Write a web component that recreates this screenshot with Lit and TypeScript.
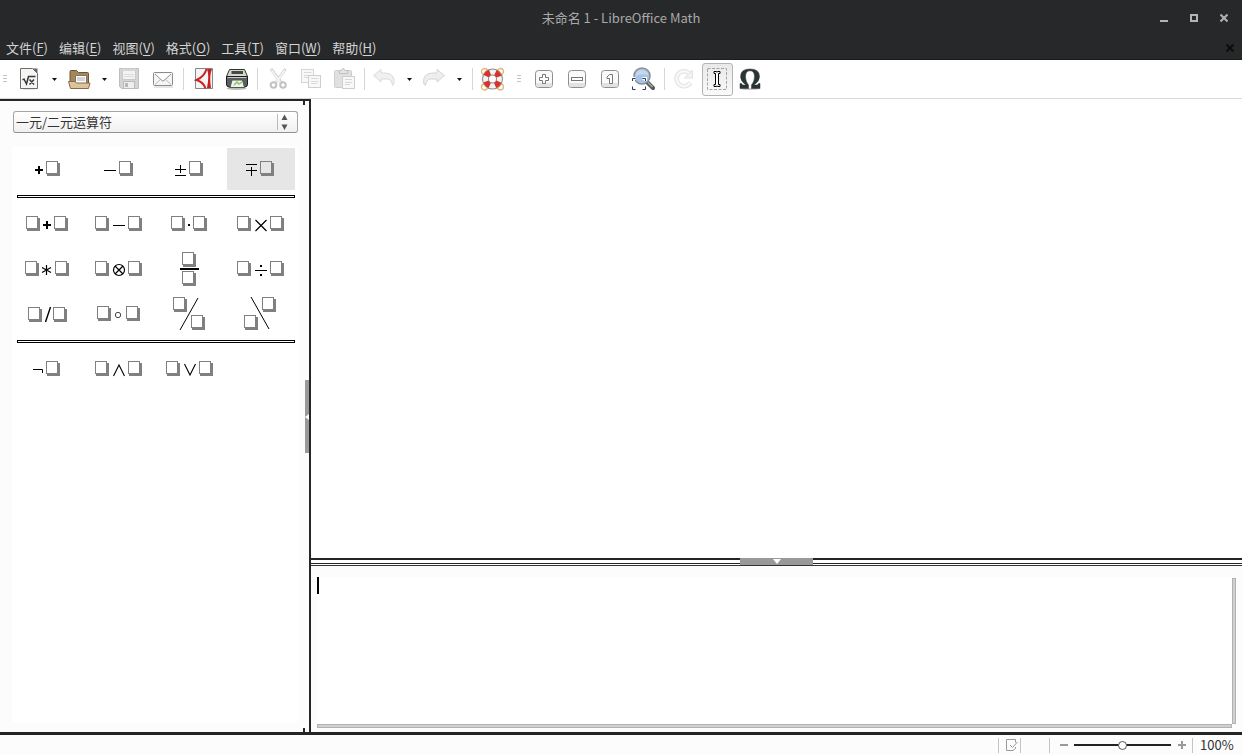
import { LitElement, html, svg, css, nothing } from "lit";
import type { TemplateResult } from "lit";
import { customElement, property, state } from "lit/decorators.js";
import { classMap } from "lit/directives/class-map.js";

/* ---------- Operator pictures, drawn on a 68 x 42 grid ---------- */

const box = (x: number, y: number, fill = "#fff") => svg`
  <rect x=${x + 1} y=${y + 2} width="13" height="13" fill="#808080"/>
  <rect x=${x + 0.5} y=${y + 0.5} width="11" height="12" fill=${fill} stroke="#808080"/>`;
const ink = (d: string, w = 1) => svg`<path d=${d} fill="none" stroke="#000" stroke-width=${w}/>`;

interface Operator { label: string; art: unknown }

const unary: Operator[] = [
  { label: "+a", art: [ink("M21 22H29M25 18V26", 2), box(32, 13)] },
  { label: "-a", art: [ink("M19 22.5H31"), box(34, 13)] },
  { label: "±a", art: [ink("M19 21.5H30M24.5 17V25M19 27.5H30"), box(33, 13)] },
  { label: "∓a", art: [ink("M19 16.5H30M24.5 19V28M19 22.5H30"), box(33, 13, "#e6e6e6")] },
];
const binary: Operator[] = [
  { label: "a+b", art: [box(12, 13), ink("M29 22H37M33 18V26", 2), box(40, 13)] },
  { label: "a-b", art: [box(10, 13), ink("M28 22.5H40"), box(43, 13)] },
  { label: "a·b", art: [box(15, 13), ink("M32 22H34", 2), box(37, 13)] },
  { label: "a×b", art: [box(10, 13), ink("M28.500 17L39.500 28M39.500 17L28.500 28", 1.2), box(43, 13)] },
  { label: "a*b", art: [box(11, 13), ink("M32.500 17V27M28 19.500L37 24.500M37 19.500L28 24.500", 1.2), box(41, 13)] },
  { label: "a⊗b", art: [box(10, 13), svg`<circle cx="34" cy="22" r="5.500" fill="none" stroke="#000" stroke-width="1.200"/>`, ink("M30 18L38 26M38 18L30 26", 1.2), box(43, 13)] },
  { label: "a/b 分数", art: [box(26, 4), ink("M24 21H43", 2), box(26, 23)] },
  { label: "a÷b", art: [box(10, 13), ink("M28 22.500H40"), ink("M33 18H35M33 27H35", 2), box(43, 13)] },
  { label: "a/b", art: [box(14, 14), ink("M36.500 14L31.500 29", 1.4), box(39, 14)] },
  { label: "a∘b", art: [box(12, 13), svg`<circle cx="33" cy="22" r="2.700" fill="none" stroke="#333" stroke-width="0.900"/>`, box(41, 13)] },
  { label: "a 斜线 b", art: [box(17, 4), ink("M42 5L24 37"), box(35, 22)] },
  { label: "a 反斜线 b", art: [box(35, 4), ink("M24 4L42 36"), box(17, 22)] },
];
const logical: Operator[] = [
  { label: "非 a", art: [ink("M19 21.500H28.500V25"), box(32, 13)] },
  { label: "a 与 b", art: [box(10, 13), ink("M28.500 28L34 17L39.500 28", 1.1), box(43, 13)] },
  { label: "a 或 b", art: [box(10, 13), ink("M28.500 16L34 27L39.500 16", 1.1), box(43, 13)] },
];

/* ---------- Toolbar icons, 24 x 24 ---------- */

const key = (inner: unknown) => svg`
  <rect x="3.500" y="3.500" width="17" height="17" rx="3" fill="#fafafa" stroke="#8e8e8e"/>
  <path d="M4 16H20V18Q20 20 17.500 20H6.500Q4 20 4 18Z" fill="#e2e2e2"/>
  ${inner}`;

const icons: Record<string, unknown> = {
  formula: svg`
    <ellipse cx="12" cy="21.500" rx="9" ry="1" fill="#ccc"/>
    <path d="M3.500 1.500H15.500L20.500 6.500V21.500H3.500Z" fill="#f5f5f4" stroke="#6d6f6c"/>
    <path d="M15.500 1.500H20.500V6.500Z" fill="#666"/>
    <path d="M5.500 13L7 12L9.500 17L11.500 9.500H18.500M12.500 12.500L17 17.500M17 12.500L12.500 17.500" fill="none" stroke="#383a38" stroke-width="1.500"/>`,
  open: svg`
    <path d="M3 19V4.500Q3 3.500 4 3.500H9.500L11.500 5.500H20.500Q21.500 5.500 21.500 6.500V19Z" fill="#a58659" stroke="#6d5431"/>
    <path d="M8.500 8.500H19.500V18H8.500Z" fill="#fff" stroke="#77756f"/>
    <path d="M10 11H18M10 13H18" stroke="#aaa"/>
    <path d="M1.500 14.500H8L9.500 16H23L21.500 21.500H3.500Z" fill="#dac49d" stroke="#8a6c42"/>`,
  save: svg`
    <path d="M2.500 1.500H21.500V21.500H4.500L2.500 19.500Z" fill="#d4d4d4" stroke="#bebebe"/>
    <rect x="5.500" y="1.500" width="13" height="11" fill="#f3f3f3" stroke="#c9c9c9"/>
    <path d="M5 3H19" stroke="#d6d6d6" stroke-width="2"/>
    <path d="M7 7.500H17M7 9.500H17" stroke="#ddd"/>
    <rect x="6.500" y="14.500" width="11" height="7" fill="#eee" stroke="#bbb"/>
    <rect x="8" y="16" width="3" height="4" fill="#b8b8b8"/>`,
  mail: svg`
    <path d="M4 20H23" stroke="#ccc"/>
    <rect x="3.500" y="5.500" width="19" height="13" rx="1" fill="#f5f5f5" stroke="#8a8c89"/>
    <path d="M5 17.500L10.500 12.500M21 17.500L15.500 12.500" stroke="#bbb"/>
    <path d="M5 7L12 13.500Q13 14.500 14 13.500L21 7" fill="#fff" stroke="#8e908c"/>`,
  pdf: svg`
    <path d="M4.500 1.500H21.500V21.500H4.500Z" fill="#f4f4f4" stroke="#85888a"/>
    <path d="M16 2Q18.500 9 16 21H20Q18 9 21 2Z" fill="#c81e1e"/>
    <path d="M15.500 2Q13.500 9.500 5.500 13Q12.500 15 14.500 21.500" fill="none" stroke="#cc2222" stroke-width="2"/>`,
  print: svg`
    <ellipse cx="12.500" cy="21.500" rx="10" ry="1.500" fill="#bbb"/>
    <path d="M5.500 2.500H20.500L23.500 9.500H2.500Z" fill="#d5d8c8" stroke="#2e3436"/>
    <path d="M7.500 4H19V7H7.500Z" fill="#444a44"/>
    <path d="M2.500 9.500H23.500V17Q23.500 20 21 20H5Q2.500 20 2.500 17Z" fill="#5a5f61" stroke="#1b1d1e"/>
    <path d="M3.500 10.500H22.500" stroke="#c4c8c6"/>
    <path d="M8 13H18.500L20.500 20.500H6Z" fill="#eef4e7" stroke="#555"/>
    <path d="M10 18L13 15L15 17L18 15" fill="none" stroke="#8cc46a" stroke-width="1.500"/>`,
  cut: svg`
    <path d="M6 2L16.500 16M20.500 2L10.500 16" stroke="#d0d0d0" stroke-width="3"/>
    <path d="M6.500 3L16 16M20 3L11 15.500" stroke="#f5f5f5" stroke-width="1.600"/>
    <circle cx="8.500" cy="18" r="2.800" fill="#fff" stroke="#c2c2c2" stroke-width="2"/>
    <circle cx="18" cy="18" r="2.800" fill="#fff" stroke="#c2c2c2" stroke-width="2"/>`,
  copy: svg`
    <rect x="3.500" y="2.500" width="12" height="13" fill="#f8f8f8" stroke="#d6d6d6"/>
    <path d="M6 5.500H13.500M6 8.500H13.500M6 10.500H12" stroke="#dadada"/>
    <rect x="10.500" y="8.500" width="12" height="12" fill="#f8f8f8" stroke="#cecece"/>
    <path d="M13 11.500H20.500M13 14.500H20.500M13 16.500H19" stroke="#dadada"/>`,
  paste: svg`
    <rect x="3.500" y="3.500" width="17" height="17" rx="1" fill="#e0e0e0" stroke="#cecece"/>
    <path d="M8.500 6.500V3.500H10.500Q12 -.500 14 3.500H16.500V6.500Z" fill="#e5e5e5" stroke="#c0c0c0"/>
    <rect x="11.500" y="9.500" width="12" height="12" fill="#f8f8f8" stroke="#cecece"/>
    <path d="M14 12.500H21M14 15.500H21M14 17.500H19" stroke="#d6d6d6"/>`,
  undo: svg`<path d="M1.500 8.500L9 2.500V6H14.500Q22 7 22 14.500Q22 17 20.500 18.500Q20 12.500 15.500 12H9V15Z" fill="#f0f0f0" stroke="#dadada"/>`,
  redo: svg`<path d="M22.500 8.500L15 2.500V6H9.500Q1.500 7 1.500 14.500Q1.500 17.500 3.500 18.500Q4 12.500 8.500 12H15V15Z" fill="#eee" stroke="#d4d4d4"/>`,
  help: svg`
    <g fill="none" stroke="#e9b56b" stroke-width="1.300">
      <circle cx="4.500" cy="4.500" r="3"/><circle cx="20.500" cy="4.500" r="3"/><circle cx="4.500" cy="20" r="3"/><circle cx="20.500" cy="20" r="3"/>
    </g>
    <circle cx="12.500" cy="12" r="7" fill="#fff" stroke="#8a8a8a" stroke-width="7"/>
    <circle cx="12.500" cy="12" r="7" fill="none" stroke="#f3f3f3" stroke-width="5"/>
    <circle cx="12.500" cy="12" r="7" fill="none" stroke="#dc302c" stroke-width="5.600" stroke-dasharray="5.500 5.500" stroke-dashoffset="-2.750"/>`,
  zoomIn: key(svg`<path d="M10.500 7.500H13.500V10.500H16.500V13.500H13.500V16.500H10.500V13.500H7.500V10.500H10.500Z" fill="#fff" stroke="#777"/>`),
  zoomOut: key(svg`<rect x="6.500" y="10.500" width="11" height="3" fill="#fff" stroke="#777"/>`),
  zoomOne: key(svg`<path d="M9 10L11.500 7.500H14.500V16.500H11.500V11.500H9Z" fill="#fff" stroke="#777"/>`),
  zoomFit: svg`
    <path d="M16 15L22 21" stroke="#55585a" stroke-width="4" stroke-linecap="round"/>
    <path d="M17 15.500L21.500 20" stroke="#aaa" stroke-width="1.500"/>
    <circle cx="11" cy="9" r="8" fill="#a7c3e5" stroke="#8b8e90" stroke-width="1.500"/>
    <path d="M4.500 9.500Q4.500 3.500 11 3Q17 3.500 17.500 8.500Q10 5.500 4.500 9.500Z" fill="#c4d8ef"/>
    <path d="M2 14V11.500H4.500M11.500 11.500H14.500V14M2 19.500V22.500H4.500M11.500 22.500H14.500V19.500" fill="none" stroke="#fff" stroke-width="3"/>
    <path d="M1.500 14V11.500H4.500M11.500 11.500H14.500V14M1.500 19.500V22.500H4.500M11.500 22.500H14.500V19.500" fill="none" stroke="#263567"/>`,
  refresh: svg`
    <path d="M18.500 15.500A7.500 7.500 0 1 1 17.500 6.500" fill="none" stroke="#e2e2e2" stroke-width="4.500"/>
    <path d="M18.500 15.500A7.500 7.500 0 1 1 17.500 6.500" fill="none" stroke="#f8f8f8" stroke-width="2.500"/>
    <path d="M20.500 3V11H12.500Z" fill="#f3f3f3" stroke="#e2e2e2"/>`,
  cursor: svg`
    <rect x="2.500" y="1.500" width="19" height="21" fill="none" stroke="#a4a4a4" stroke-dasharray="3 1.500"/>
    <path d="M9 4.500H11L12 5L13 4.500H15V6.500H13.500V17.500H15V19.500H13L12 19L11 19.500H9V17.500H10.500V6.500H9Z" fill="#fff" stroke="#000"/>`,
  omega: svg`
    <ellipse cx="12" cy="22" rx="9" ry="1" fill="#ccc"/>
    <path d="M2 16.500H3.500L4.500 18H8Q2.500 14.500 2.500 9.500Q2.500 2 12 2Q21.500 2 21.500 9.500Q21.500 14.500 16 18H19.500L20.500 16.500H22V21.500H13.500V18Q16.500 14.500 16.500 9.500Q16.500 3.800 12 3.800Q7.500 3.800 7.500 9.500Q7.500 14.500 10.500 18V21.500H2Z" fill="#2b3335" stroke="#2b3335" stroke-width="0.500"/>`,
};

@customElement("tool-button")
class ToolButton extends LitElement {
  @property() icon = "";
  @property() label = "";
  @property({ type: Boolean }) disabled = false;
  @property({ type: Boolean }) pressed = false;
  @property({ type: Boolean }) menu = false;

  static styles = css`
    :host { display: flex; }
    button {
      box-sizing: border-box; display: flex; align-items: center; justify-content: center;
      height: 33px; padding: 0; border: 1px solid transparent; border-radius: 3px; background: none;
    }
    .tool { width: 33px; padding-right: 1px; }
    .drop { width: 17px; }
    .pressed { width: 31px; margin: 0 1px; border-color: #b4b4b4; background: linear-gradient(#e9e9e9, #fafafa); }
    svg { display: block; flex: none; }
  `;

  render() {
    return html`
      <button class=${classMap({ tool: true, pressed: this.pressed })} aria-label=${this.label} ?disabled=${this.disabled}>
        <svg width="24" height="24" viewBox="0 0 24 24">${icons[this.icon]}</svg>
      </button>
      ${this.menu ? html`
        <button class="drop" aria-label=${this.label + "选项"}>
          <svg width="5" height="3" viewBox="0 0 5 3"><path d="M0 0H5L2.500 3Z" fill="#111"/></svg>
        </button>` : nothing}`;
  }
}

@customElement("operator-panel")
class OperatorPanel extends LitElement {
  static styles = css`
    :host { display: flex; flex-direction: column; min-height: 0; }
    .picker { position: relative; display: flex; margin: 10px 0 13px 1px; }
    select {
      appearance: none; width: 100%; height: 22px; padding: 0 0 0 2px;
      border: 1px solid #a6a6a6; border-bottom-color: #919191; border-radius: 3px;
      background: linear-gradient(#fff, #f0f0f0); color: #333;
      font: 13px/20px "Noto Sans CJK SC", "Noto Sans", sans-serif;
    }
    .spin {
      position: absolute; right: 0; top: 3px; width: 20px; height: 16px;
      border-left: 1px solid #bbb; pointer-events: none;
    }
    .list { flex: 1; padding: 2px 2px 0; background: #fff; }
    .group { display: grid; grid-template-columns: repeat(4, 68px); gap: 3px; }
    .rule { height: 1px; margin: 5px 1px 5px 3px; border: 1px solid #000; }
    .cell { display: block; width: 68px; height: 42px; padding: 0; border: 0; background: none; }
    .active { background: #e6e6e6; }
    svg { display: block; }
  `;

  private group(ops: Operator[], active = -1) {
    return html`<div class="group">${ops.map((op, i) => html`
      <button class=${classMap({ cell: true, active: i === active })} aria-label=${op.label}>
        <svg width="68" height="42" viewBox="0 0 68 42">${op.art}</svg>
      </button>`)}</div>`;
  }

  render() {
    return html`
      <div class="picker">
        <select aria-label="元素类别">
          <option>一元/二元运算符</option>
          <option>关系</option>
          <option>集合运算</option>
          <option>函数</option>
        </select>
        <svg class="spin" viewBox="0 0 20 16"><path d="M3.500 6L6.500 .500L9.500 6ZM3.500 10.500L6.500 16L9.500 10.500Z" fill="#555"/></svg>
      </div>
      <div class="list">
        ${this.group(unary, 3)}
        <div class="rule"></div>
        ${this.group(binary)}
        <div class="rule"></div>
        ${this.group(logical)}
      </div>`;
  }
}

@customElement("app-root")
class AppRoot extends LitElement {
  @state() private zoom = 100;

  static styles = css`
    :host {
      display: flex; flex-direction: column; height: 100vh; overflow: hidden; background: #fff;
      font: 13px/20px "Noto Sans CJK SC", "Noto Sans", sans-serif; color: #333;
    }
    * { box-sizing: border-box; }
    button { padding: 0; border: 0; background: none; font: inherit; color: inherit; }
    svg { display: block; }
    .chrome { background: #262829; color: #d4d4d4; border-bottom: 1px solid #1b1b1b; }
    .title { display: grid; grid-template-columns: 1fr auto 1fr; align-items: center; height: 36px; color: #a9a9a9; }
    .title h1 { grid-column: 2; margin: 0; font: inherit; }
    .controls { display: flex; justify-content: flex-end; gap: 10px; padding-right: 8px; }
    .controls button { display: grid; place-items: center; width: 20px; height: 20px; }
    .menubar { display: flex; align-items: center; height: 23px; }
    .menubar nav { display: flex; flex: 1; gap: 11px; padding-left: 6px; }
    .menubar a { color: inherit; text-decoration: none; }
    .menubar u { text-underline-offset: 2px; }
    .menubar .close { display: grid; place-items: center; width: 24px; height: 20px; }
    .toolbar { display: flex; align-items: center; height: 39px; border-bottom: 1px solid #d8d8d8; background: #fff; }
    .grip { width: 19px; height: 8px; display: flex; justify-content: center; }
    .grip.first { width: 13px; padding-right: 3px; }
    .sep { width: 8px; height: 22px; display: flex; justify-content: center; }
    .sep::before { content: ""; width: 1px; background: #d6d6d6; }
    .main { display: flex; flex: 1; min-height: 0; border-bottom: 3px solid #242424; }
    .side {
      display: flex; flex: none; width: 311px; background: #fcfcfc;
      border-top: 2px solid #242628; border-right: 2px solid #242628;
    }
    operator-panel { flex: 1; margin: 0 0 10px 12px; }
    .vsplit { display: flex; flex-direction: column; justify-content: space-between; width: 11px; padding-left: 5px; }
    .vsplit i { width: 2px; height: 4px; background: #242628; }
    .vsplit button { width: 4px; height: 73px; margin-left: 2px; background: #999; display: flex; align-items: center; }
    .work { display: flex; flex-direction: column; flex: 1; min-width: 0; }
    .canvas { flex: 1; background: #fff; }
    .hsplit {
      display: flex; justify-content: center; height: 8px; flex: none;
      background: linear-gradient(#242424 2px, #fff 2px 5px, #242424 5px 6px, #fff 6px 7px, #333 7px);
    }
    .hsplit button { width: 73px; height: 7px; background: #999; display: flex; justify-content: center; padding-top: 1px; }
    .editor {
      display: grid; grid-template: 1fr 4px / 1fr 4px; flex: none; height: 166px;
      padding: 11px 6px 4px; background: #fcfcfc;
    }
    .field { position: relative; display: flex; background: #fff; }
    textarea { flex: 1; border: 0; padding: 0 4px; resize: none; outline: none; font: inherit; background: none; }
    .caret { position: absolute; left: 0; top: 0; width: 2px; height: 17px; background: #000; }
    .bar { border: 1px solid #b2b2b2; background: #d0d0d0; }
    .bar.down { margin-top: 1px; }
    .status { display: flex; align-items: center; justify-content: flex-end; flex: none; height: 20px; background: #fcfcfc; }
    .status .div { width: 1px; height: 15px; background: #c4c4c4; }
    .status .doc { margin-right: 28px; }
    .status button { display: grid; place-items: center; height: 20px; }
    .status .doc-button { width: 21px; padding-left: 4px; }
    .status .plus { width: 21px; }
    .status .minus { width: 24px; padding-left: 4px; }
    .zoom { appearance: none; width: 97px; height: 12px; margin: 0; background: linear-gradient(#222, #222) center / 100% 2px no-repeat; }
    .zoom::-webkit-slider-thumb {
      appearance: none; width: 9px; height: 9px; border: 1px solid #555; border-radius: 50%; background: #fff;
    }
    .percent { width: 49px; padding-left: 7px; }
  `;

  private menuItem(name: string, accel: string): TemplateResult {
    return html`<a href="#">${name}(<u>${accel}</u>)</a>`;
  }

  private grip(first = false) {
    return html`<span class=${classMap({ grip: true, first })}>
      <svg width="4" height="8" viewBox="0 0 4 8"><path d="M0 .500H4M0 3.500H4M0 6.500H4" stroke="#c4c4c4"/></svg>
    </span>`;
  }

  render() {
    const sep = html`<span class="sep"></span>`;
    return html`
      <header class="chrome">
        <div class="title">
          <h1>未命名 1 - LibreOffice Math</h1>
          <div class="controls">
            <button aria-label="最小化"><svg width="8" height="8"><path d="M0 7H8" stroke="#b4b4b4" stroke-width="2"/></svg></button>
            <button aria-label="最大化"><svg width="8" height="8"><rect x="1" y="1" width="6" height="6" fill="none" stroke="#b4b4b4" stroke-width="2"/></svg></button>
            <button aria-label="关闭"><svg width="8" height="8"><path d="M.500 .500L7.500 7.500M7.500 .500L.500 7.500" stroke="#b4b4b4" stroke-width="2"/></svg></button>
          </div>
        </div>
        <div class="menubar">
          <nav>
            ${this.menuItem("文件", "F")}${this.menuItem("编辑", "E")}${this.menuItem("视图", "V")}
            ${this.menuItem("格式", "O")}${this.menuItem("工具", "T")}${this.menuItem("窗口", "W")}
            ${this.menuItem("帮助", "H")}
          </nav>
          <button class="close" aria-label="关闭文档"><svg width="8" height="8"><path d="M.500 .500L7.500 7.500M7.500 .500L.500 7.500" stroke="#0c0c0c" stroke-width="2"/></svg></button>
        </div>
      </header>

      <div class="toolbar">
        ${this.grip(true)}
        <tool-button icon="formula" label="新建" menu></tool-button>
        <tool-button icon="open" label="打开" menu></tool-button>
        <tool-button icon="save" label="保存" disabled></tool-button>
        <tool-button icon="mail" label="发送邮件"></tool-button>
        ${sep}
        <tool-button icon="pdf" label="导出为 PDF"></tool-button>
        <tool-button icon="print" label="打印"></tool-button>
        ${sep}
        <tool-button icon="cut" label="剪切" disabled></tool-button>
        <tool-button icon="copy" label="复制" disabled></tool-button>
        <tool-button icon="paste" label="粘贴" disabled></tool-button>
        ${sep}
        <tool-button icon="undo" label="撤消" disabled menu></tool-button>
        <tool-button icon="redo" label="恢复" disabled menu></tool-button>
        ${sep}
        <tool-button icon="help" label="帮助"></tool-button>
        ${this.grip()}
        <tool-button icon="zoomIn" label="放大"></tool-button>
        <tool-button icon="zoomOut" label="缩小"></tool-button>
        <tool-button icon="zoomOne" label="原始大小"></tool-button>
        <tool-button icon="zoomFit" label="显示全部"></tool-button>
        ${sep}
        <tool-button icon="refresh" label="更新" disabled></tool-button>
        <tool-button icon="cursor" label="公式光标" pressed></tool-button>
        <tool-button icon="omega" label="符号"></tool-button>
      </div>

      <main class="main">
        <aside class="side">
          <operator-panel></operator-panel>
          <div class="vsplit">
            <i></i>
            <button aria-label="隐藏元素"><svg width="4" height="6"><path d="M4 0V6L0 3Z" fill="#fff"/></svg></button>
            <i></i>
          </div>
        </aside>
        <section class="work">
          <div class="canvas"></div>
          <div class="hsplit"><button aria-label="隐藏命令"><svg width="8" height="5"><path d="M0 0H8L4 5Z" fill="#fff"/></svg></button></div>
          <div class="editor">
            <div class="field"><textarea aria-label="命令"></textarea><span class="caret"></span></div>
            <div class="bar down"></div>
            <div class="bar"></div>
          </div>
        </section>
      </main>

      <footer class="status">
        <span class="div"></span>
        <button class="doc-button" aria-label="文档修改状态">
          <svg width="12" height="12" viewBox="0 0 12 12"><path d="M9.500 3.500V.500H.500V11.500H7L9.500 9.500V8M4 6L6.500 8.500L11.500 3" fill="none" stroke="#999"/></svg>
        </button>
        <span class="div doc"></span>
        <span class="div"></span>
        <button class="minus" aria-label="缩小显示"><svg width="8" height="8"><path d="M0 4H8" stroke="#999" stroke-width="2"/></svg></button>
        <input class="zoom" type="range" min="0" max="200" aria-label="显示比例" .value=${String(this.zoom)}
          @input=${(e: Event) => (this.zoom = Number((e.target as HTMLInputElement).value))}>
        <button class="plus" aria-label="放大显示"><svg width="8" height="8"><path d="M0 4H8M4 0V8" stroke="#999" stroke-width="2"/></svg></button>
        <span class="div"></span>
        <span class="percent">${this.zoom}%</span>
      </footer>`;
  }
}
